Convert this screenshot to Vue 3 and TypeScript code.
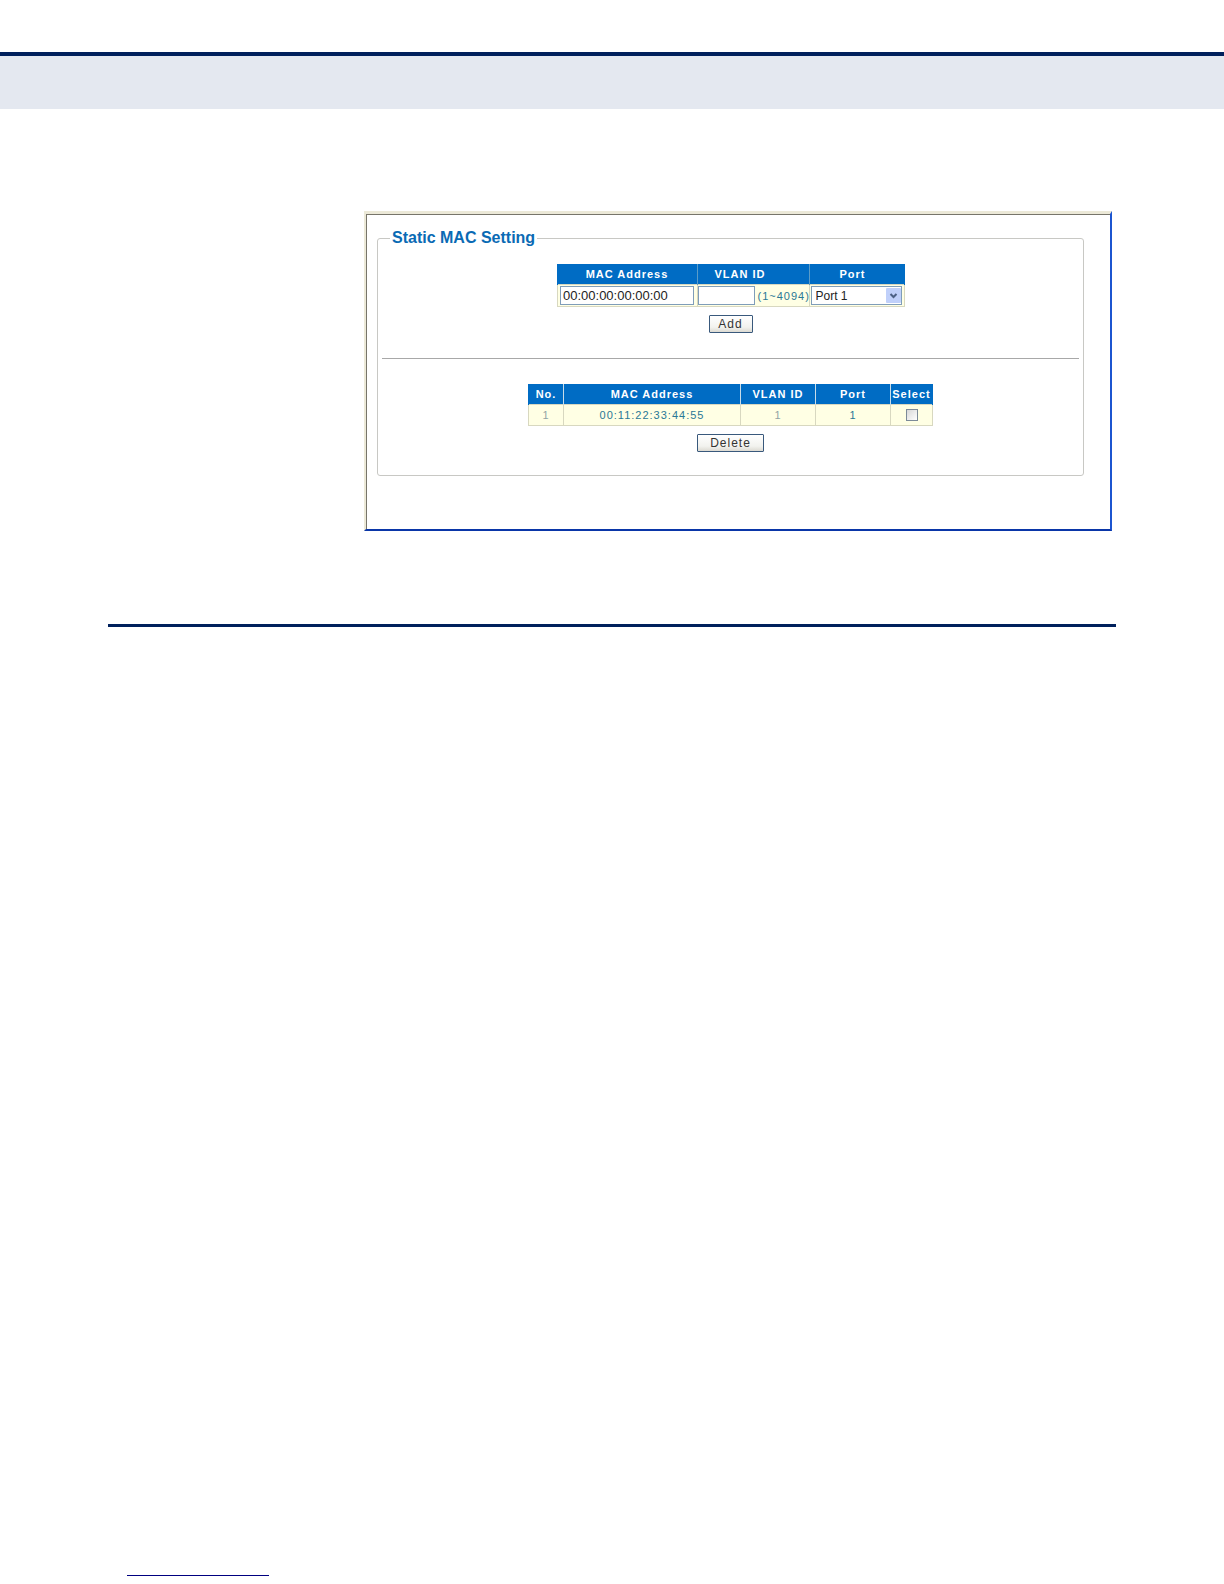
<script setup lang="ts">
import { ref } from 'vue'

interface StaticMac {
  no: number
  mac: string
  vlan: number
  port: number
  selected: boolean
}

const mac = ref('00:00:00:00:00:00')
const vlan = ref('')
const port = ref(1)
const ports = [1, 2, 3, 4]

const entries = ref<StaticMac[]>([
  { no: 1, mac: '00:11:22:33:44:55', vlan: 1, port: 1, selected: false },
])

function addEntry() {
  entries.value.push({
    no: entries.value.length + 1,
    mac: mac.value,
    vlan: Number(vlan.value),
    port: port.value,
    selected: false,
  })
}

function deleteSelected() {
  entries.value = entries.value.filter((e) => !e.selected)
}
</script>

<template>
  <div class="page">
    <header class="band"></header>
    <main class="content">
      <div class="frame">
        <fieldset class="group">
          <legend>Static MAC Setting</legend>
          <form class="block" @submit.prevent="addEntry">
            <table class="grid add-grid">
              <colgroup>
                <col class="w-mac" />
                <col class="w-vlan" />
                <col class="w-port" />
              </colgroup>
              <thead>
                <tr>
                  <th><label for="mac">MAC Address</label></th>
                  <th class="vlan-head"><label for="vlan">VLAN ID</label></th>
                  <th class="port-head"><label for="port">Port</label></th>
                </tr>
              </thead>
              <tbody>
                <tr>
                  <td><input id="mac" v-model="mac" class="field mac-field" type="text" /></td>
                  <td>
                    <div class="vlan-cell">
                      <input id="vlan" v-model="vlan" class="field vlan-field" type="text" />
                      <span>(1~4094)</span>
                    </div>
                  </td>
                  <td>
                    <div class="select-box">
                      <select id="port" v-model="port" class="field">
                        <option v-for="p in ports" :key="p" :value="p">Port {{ p }}</option>
                      </select>
                      <svg class="arrow" viewBox="0 0 15 15" aria-hidden="true">
                        <rect width="15" height="15" rx="1" fill="#c0d0fa" />
                        <path d="M4.5 6l3 3 3-3" fill="none" stroke="#4d6185" stroke-width="2" />
                      </svg>
                    </div>
                  </td>
                </tr>
              </tbody>
            </table>
            <button class="btn add" type="submit">Add</button>
          </form>
          <hr class="divider" />
          <form class="block" @submit.prevent="deleteSelected">
            <table class="grid list-grid">
              <colgroup>
                <col class="w-no" />
                <col class="w-addr" />
                <col class="w-num" />
                <col class="w-num" />
                <col class="w-select" />
              </colgroup>
              <thead>
                <tr>
                  <th>No.</th>
                  <th>MAC Address</th>
                  <th>VLAN ID</th>
                  <th>Port</th>
                  <th>Select</th>
                </tr>
              </thead>
              <tbody>
                <tr v-for="e in entries" :key="e.no">
                  <td class="dim">{{ e.no }}</td>
                  <td>{{ e.mac }}</td>
                  <td class="dim">{{ e.vlan }}</td>
                  <td>{{ e.port }}</td>
                  <td>
                    <input v-model="e.selected" class="tick" type="checkbox" :aria-label="'Select ' + e.mac" />
                  </td>
                </tr>
              </tbody>
            </table>
            <button class="btn delete" type="submit">Delete</button>
          </form>
        </fieldset>
      </div>
      <hr class="section-rule" />
    </main>
    <footer class="foot">
      <hr class="foot-rule" />
    </footer>
  </div>
</template>

<style>
body {
  margin: 0;
  background: #fff;
}
</style>

<style scoped>
.page {
  display: flex;
  flex-direction: column;
  box-sizing: border-box;
  min-height: 100vh;
  padding-top: 52px;
  font-family: "Liberation Sans", Arial, sans-serif;
  font-size: 11px;
  letter-spacing: 1px;
}
.band {
  height: 53px;
  border-top: 4px solid #00205c;
  background: #e4e8f0;
}
.content {
  padding: 102px 108px 0;
}
.frame {
  margin: 0 4px 0 256px;
  padding: 15px 26px 53px 11px;
  border-style: solid;
  border-width: 3px 2px 2px;
  border-color: #ece9d8 #1c55d0 #0a36a8 #ece9d8;
  box-shadow: inset 1px 1px 0 #77756a;
}
.group {
  min-width: 0;
  margin: 0;
  padding: 0 4px 23px;
  border: 1px solid #c8c8c4;
  border-radius: 3px;
}
legend {
  margin-left: 8px;
  padding: 0 2px;
  font-size: 16px;
  font-weight: bold;
  line-height: 18px;
  letter-spacing: normal;
  color: #0a6ab4;
}
.block {
  display: flex;
  flex-direction: column;
  align-items: center;
}
.grid {
  table-layout: fixed;
  border-collapse: collapse;
  text-align: center;
  line-height: 14px;
  color: #2a7896;
}
.add-grid {
  width: 347px;
  margin-top: 17px;
}
.list-grid {
  width: 404px;
  margin-top: 25px;
}
.w-mac { width: 140px; }
.w-vlan { width: 112px; }
.w-port { width: 95px; }
.w-no { width: 35px; }
.w-addr { width: 177px; }
.w-num { width: 75px; }
.w-select { width: 42px; }
th {
  height: 20px;
  padding: 0;
  border: 1px solid #5a9cc8;
  border-width: 0 1px;
  background: #006cc4;
  color: #fff;
}
.list-grid th {
  border-color: #c8dce8;
}
.list-grid th:first-child,
.add-grid th:first-child {
  border-left-color: #006cc4;
}
.list-grid th:last-child,
.add-grid th:last-child {
  border-right-color: #006cc4;
}
.vlan-head {
  padding-right: 26px;
}
.port-head {
  padding-right: 8px;
}
td {
  height: 20px;
  padding: 0;
  border: 1px solid #d8d8c0;
  background: #ffffe4;
}
.add-grid td {
  height: 21px;
}
.list-grid td + td {
  border-left-color: #b0b0a0;
}
.dim {
  color: #92a4a4;
}
.field {
  display: block;
  box-sizing: border-box;
  height: 19px;
  margin: 0;
  padding: 0 2px;
  border: 1px solid #7f9db9;
  border-radius: 0;
  background: #fff;
  font-family: inherit;
  font-size: 12px;
  color: #222;
}
.mac-field {
  width: 134px;
  margin: 0 auto;
  font-size: 13px;
}
.vlan-cell {
  display: flex;
  align-items: center;
  gap: 3px;
}
.vlan-field {
  flex: none;
  width: 57px;
}
.select-box {
  position: relative;
  margin: 0 2px 0 1px;
}
.select-box select {
  width: 100%;
  padding-left: 4px;
  appearance: none;
}
.arrow {
  position: absolute;
  top: 2px;
  right: 1px;
  width: 15px;
  height: 15px;
  pointer-events: none;
}
.btn {
  box-sizing: border-box;
  height: 18px;
  padding: 0;
  border: 1px solid #39597c;
  border-radius: 1px;
  background: linear-gradient(#fff, #f2f2ee 70%, #dcdad2);
  font-family: inherit;
  font-size: 12px;
  line-height: 16px;
  letter-spacing: inherit;
  color: #333;
}
.add {
  width: 44px;
  margin-top: 8px;
}
.delete {
  width: 67px;
  margin-top: 8px;
}
.divider {
  height: 1px;
  margin: 25px 0 0;
  border: 0;
  background: #a8a8a8;
}
.tick {
  display: block;
  box-sizing: border-box;
  width: 12px;
  height: 12px;
  margin: 0 auto;
  border: 1px solid #7c8a98;
  appearance: none;
  background: linear-gradient(135deg, #d8d8d8, #fff);
}
.tick:checked {
  background: #2a7896;
}
.section-rule {
  height: 3px;
  margin: 93px 0 0;
  border: 0;
  background: #00205c;
}
.foot {
  margin-top: auto;
  padding: 0 127px 8px;
}
.foot-rule {
  width: 142px;
  height: 1px;
  margin: 0;
  border: 0;
  background: #000080;
}
</style>
